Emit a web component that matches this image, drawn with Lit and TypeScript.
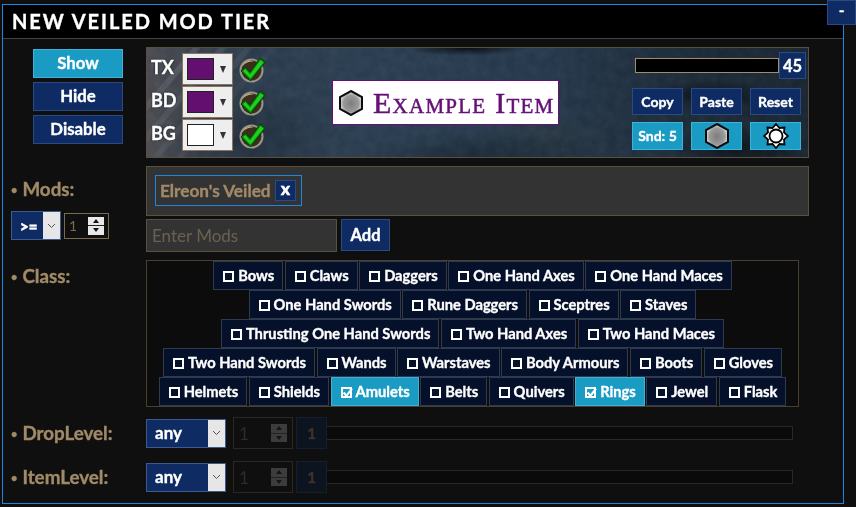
import { LitElement, html, css, svg } from "lit";
import { customElement } from "lit/decorators.js";

const ROWS: string[][] = [
  ["Bows", "Claws", "Daggers", "One Hand Axes", "One Hand Maces"],
  ["One Hand Swords", "Rune Daggers", "Sceptres", "Staves"],
  ["Thrusting One Hand Swords", "Two Hand Axes", "Two Hand Maces"],
  ["Two Hand Swords", "Wands", "Warstaves", "Body Armours", "Boots", "Gloves"],
  ["Helmets", "Shields", "Amulets", "Belts", "Quivers", "Rings", "Jewel", "Flask"],
];
const CHECKED = new Set(["Amulets", "Rings"]);

const hex = (size: number, id: string) => html`<svg width=${size} height=${Math.round(size * 1.1)} viewBox="0 0 24 26">
  <defs><radialGradient id=${id} cx="50%" cy="52%" r="52%"><stop offset="0" stop-color="#7e7e7e"/><stop offset="0.65" stop-color="#999"/><stop offset="1" stop-color="#e4e4e4"/></radialGradient></defs>
  <polygon points="12,1 23,7 23,19 12,25 1,19 1,7" fill="url(#${id})" stroke="#0c0c0c" stroke-width="2"/>
</svg>`;

const checkIcon = () => html`<svg class="chk" width="27" height="27" viewBox="0 0 27 27">
  <circle cx="12.5" cy="14.5" r="12" fill="#9a958a"/>
  <circle cx="12.5" cy="14.5" r="10" fill="#3c2d1c"/>
  <path d="M11 4.5 a10 10 0 0 0 -8 6 a14 14 0 0 1 12 -5z" fill="#c2b57f"/>
  <path d="M2 15 L6.5 11 L11 16 L21 2 L26.5 6 L11.5 25 Z" fill="#0a7a0a" stroke="#0b3d0b" stroke-width="1"/>
  <path d="M4 15 L6.5 13 L11 18.5 L21.5 4 L24.5 6.5 L11.5 22.5 Z" fill="#1fd11f"/>
</svg>`;

@customElement("app-root")
export class AppRoot extends LitElement {
  static styles = css`
    :host { display: block; width: 856px; height: 507px; background: #0f0f0f; position: relative; overflow: hidden;
      font-family: "Lato", "Liberation Sans", sans-serif; font-weight: 700; font-size: 15px; color: #fff;
      -webkit-text-stroke: 0.35px currentColor; }
    * { box-sizing: border-box; }
    .panel { position: absolute; left: 2px; top: 4px; width: 842px; height: 500px; border: 1px solid #1d86e0; background: #0f0f0f; }
    .title { height: 34px; background: #000; border-bottom: 1px solid #444; padding-left: 9px; font-size: 20px; letter-spacing: 1.95px; line-height: 33px; }
    .min { position: absolute; left: 827px; top: 0; width: 29px; height: 25px; background: #0e2c63; border: 1px solid #2c4a80; text-align: center; line-height: 19px; font-size: 15px; z-index: 2; }
    .row { display: flex; }
    .side { width: 143px; flex: none; }
    .main { width: 663px; flex: none; }
    .r1 { margin-top: 8px; height: 111px; }
    .r1 .side { padding: 2px 0 0 30px; display: flex; flex-direction: column; gap: 4px; }
    .btn { background: #0e2c63; border: 1px solid #2c4a80; display: flex; align-items: center; justify-content: center; }
    .btn.on { background: #1a9bc3; border-color: #3fb3d6; }
    .r1 .side .btn { width: 90px; height: 29px; padding-bottom: 3px; font-size: 16.8px; }
    .preview { position: relative; height: 111px; border: 1px solid #5a5040; overflow: hidden; display: flex;
      background:
        radial-gradient(ellipse 70px 16px at 565px 48px, rgba(5,8,12,.7), transparent),
        radial-gradient(ellipse 70px 22px at 590px 100px, rgba(8,10,14,.65), transparent),
        radial-gradient(ellipse 60px 8px at 320px 0, rgba(5,8,10,.9), transparent),
        radial-gradient(ellipse 90px 50px at 100px 90px, rgba(15,22,30,.35), transparent),
        radial-gradient(ellipse 130px 25px at 330px 108px, rgba(12,20,28,.45), transparent),
        radial-gradient(ellipse 70px 24px at 400px 90px, rgba(50,55,40,.25), transparent),
        linear-gradient(90deg, #4a4b50 0, #3c424c 6%, #2b3b4d 16%, #2a3d50 38%, #25374a 60%, #1d2b39 80%, #1a2530 100%); }
    .grain { position: absolute; inset: 0; width: 100%; height: 100%; mix-blend-mode: soft-light; opacity: .3; }
    .streaks { position: absolute; left: 0; top: 0; width: 140px; height: 109px; }
    .colors { position: relative; width: 150px; flex: none; padding: 5px 0 0 4px; display: flex; flex-direction: column; gap: 1px; }
    .crow { display: flex; align-items: center; height: 32px; }
    .clabel { width: 31px; font-size: 18px; padding-bottom: 4px; text-shadow: 0 0 2px #000; }
    .swatch { width: 51px; height: 32px; background: #eee; border: 1px solid #8a7460; padding: 4px; display: flex; align-items: center; gap: 6px; }
    .swatch i { display: block; width: 27px; height: 22px; border: 1px solid #222; }
    .swatch b { width: 0; height: 0; border-left: 3.5px solid transparent; border-right: 3.5px solid transparent; border-top: 7px solid #333; }
    .chk { margin-left: 6px; }
    .center { position: relative; width: 262px; flex: none; padding: 32px 0 0 35px; }
    .item { width: 227px; height: 45px; background: #fff; border: 1px solid #660f78; display: flex; align-items: center; padding-left: 6px; gap: 10px;
      color: #660f78; font-family: "Liberation Serif", serif; font-variant: small-caps; font-weight: 400; font-size: 30px; letter-spacing: 1.25px; white-space: nowrap; -webkit-text-stroke: 0.5px currentColor; }
    .item svg { flex: none; }
    .right { position: absolute; left: 0; top: 0; width: 100%; padding-top: 4px; }
    .sl { display: flex; height: 27px; align-items: center; padding-left: 488px; }
    .sl .track { width: 144px; height: 15px; background: #000; border: 1px solid #a08c6e; }
    .sl .val { width: 27px; height: 27px; font-size: 16.5px; }
    .brow { display: flex; gap: 8px; padding-left: 485px; }
    .brow .btn { width: 51px; height: 27px; font-size: 14px; padding-bottom: 1px; }
    .b1 { margin-top: 9px; }
    .b2 { margin-top: 7px; align-items: center; }
    .b2 .btn { height: 28px; }
    .lab { color: #a08a68; font-size: 18.8px; height: 26px; line-height: 26px; padding-left: 8px; white-space: nowrap; }
    .lab::before { content: "•"; font-size: 11px; margin-right: 5px; vertical-align: 2px; }
    .r2 { margin-top: 8px; height: 86px; }
    .r2 .side { padding-top: 10px; }
    .ops { display: flex; align-items: center; margin: 9px 0 0 8px; gap: 3px; }
    .sel { display: flex; background: #0e2c63; border: 1px solid #3a5a90; }
    .sel .v { flex: 1; }
    .sel .a { width: 17px; flex: none; background: #e6e6e6; display: flex; align-items: center; justify-content: center; }
    .ge { width: 50px; height: 29px; }
    .ge .v { padding: 5px 0 0 8px; font-size: 15px; line-height: 18px; -webkit-text-stroke: .6px #fff; }
    .num { border: 1px solid #7a6a52; width: 45px; height: 26px; display: flex; align-items: center; padding-left: 4px; color: #7a6a52; font-weight: 400; font-size: 14px; justify-content: space-between; padding-right: 4px; -webkit-text-stroke: 0; }
    .spin { width: 16px; height: 18px; display: flex; flex-direction: column; gap: 1px; background: #222; }
    .spin span { flex: 1; background: #e8e8e8; display: flex; align-items: center; justify-content: center; }
    .spin u { width: 0; height: 0; border-left: 3.5px solid transparent; border-right: 3.5px solid transparent; }
    .spin .up { border-bottom: 4px solid #111; }
    .spin .dn { border-top: 4px solid #111; }
    .mods { height: 50px; background: #333; border: 1px solid #5a5040; padding: 8px 0 0 8px; }
    .chip { display: flex; align-items: center; justify-content: space-between; width: 147px; height: 31px; border: 1px solid #1d86e0; padding: 0 5px 0 4px; color: #a08a68; font-size: 17.2px; white-space: nowrap; }
    .chip .x { width: 21px; height: 21px; font-size: 17px; padding-bottom: 4px; flex: none; color: #fff; -webkit-text-stroke: .7px #fff; }
    .add { display: flex; gap: 4px; margin-top: 3px; }
    .input { width: 191px; height: 33px; background: #333; border: 1px solid #5a5040; color: #6c6150; font-weight: 400; font-size: 17px; line-height: 31px; padding-left: 5px; -webkit-text-stroke: 0; }
    .add .btn { width: 49px; height: 32px; font-size: 16.5px; }
    .r3 { margin-top: 8px; }
    .r3 .side { padding-top: 3px; }
    .classes { width: 653px; height: 147px; background: #0c0c0c; border: 1px solid #4a4030; display: flex; flex-direction: column; }
    .crow2 { display: flex; justify-content: center; height: 29px; gap: 1.5px; }
    .cb { height: 29px; background: #05112a; border: 1px solid #2f3a4f; display: flex; align-items: center; padding: 0 8px 2px 9px; gap: 4px; font-size: 14.7px; white-space: nowrap; }
    .cb.on { background: #1a9bc3; border-color: #3fb3d6; }
    .box { width: 11px; height: 11px; border: 2px solid #fff; background: #08122a; flex: none; margin-top: 3px; position: relative; }
    .cb.on .box { background: transparent; }
    .cb.on .box svg { position: absolute; left: -1px; top: -2px; }
    .lv { height: 32px; align-items: center; }
    .lv .side { height: 32px; padding-top: 3px; }
    .lv-main { display: flex; align-items: center; }
    .anysel { width: 80px; height: 29px; }
    .anysel .v { padding-left: 8px; font-size: 17px; line-height: 25px; }
    .dnum { width: 60px; height: 32px; margin-left: 7px; border: 1px solid #2b2722; display: flex; align-items: center; justify-content: space-between; padding: 0 5px; color: #2e2b28; font-weight: 400; font-size: 17px; -webkit-text-stroke: 0; }
    .dnum .spin { width: 16px; height: 18px; background: #222; }
    .dnum .spin span { background: #3c3c3c; }
    .dnum .spin .up { border-bottom-color: #151515; }
    .dnum .spin .dn { border-top-color: #151515; }
    .dval { width: 31px; height: 32px; margin-left: 3px; background: #0c1420; border: 1px solid #161d2b; color: #3f3428; display: flex; align-items: center; justify-content: center; font-size: 15px; }
    .dtrack { width: 466px; height: 14px; border: 1px solid #2b2722; background: #0a0a0a; border-left: none; }
    .lv2 { margin-top: 12px; }
    .lv1 { margin-top: 10px; }
  `;

  private spin() {
    return html`<div class="spin"><span><u class="up"></u></span><span><u class="dn"></u></span></div>`;
  }
  private chev() {
    return html`<svg width="9" height="6" viewBox="0 0 9 6"><path d="M1 1 L4.5 4.5 L8 1" fill="none" stroke="#555" stroke-width="1"/></svg>`;
  }
  private level(name: string, cls: string) {
    return html`<div class="row lv ${cls}">
      <div class="side"><div class="lab">${name}:</div></div>
      <div class="lv-main">
        <div class="sel anysel"><div class="v">any</div><div class="a">${this.chev()}</div></div>
        <div class="dnum">1 ${this.spin()}</div>
        <div class="dval">1</div>
        <div class="dtrack"></div>
      </div>
    </div>`;
  }

  render() {
    return html`
      <div class="min">-</div>
      <div class="panel">
        <div class="title">NEW VEILED MOD TIER</div>
        <div class="row r1">
          <div class="side">
            <div class="btn on">Show</div><div class="btn">Hide</div><div class="btn">Disable</div>
          </div>
          <div class="main preview">
            <svg class="streaks" viewBox="0 0 140 109">
              ${[8, 34, 60, 84].map((x, i) => svg`<path d="M${x - 60} 120 L${x + 50} -10" stroke="#8a8f96" stroke-opacity="${0.22 - i * 0.05}" stroke-width="6" fill="none"/>`)}
            </svg>
            <svg class="grain"><filter id="gr"><feTurbulence type="fractalNoise" baseFrequency="0.1" numOctaves="3" seed="4"/><feColorMatrix values="0 0 0 0 .5  0 0 0 0 .5  0 0 0 0 .5  1.6 0 0 0 -.4"/></filter><rect width="100%" height="100%" filter="url(#gr)"/></svg>
            <div class="colors">
              ${[["TX", "#630f70"], ["BD", "#630f70"], ["BG", "#fff"]].map(([l, c]) => html`<div class="crow">
                <div class="clabel">${l}</div>
                <div class="swatch"><i style="background:${c}"></i><b></b></div>
                ${checkIcon()}
              </div>`)}
            </div>
            <div class="center"><div class="item">${hex(24, "h1")}<span>Example Item</span></div></div>
            <div class="right">
              <div class="sl"><div class="track"></div><div class="btn val">45</div></div>
              <div class="brow b1"><div class="btn">Copy</div><div class="btn">Paste</div><div class="btn">Reset</div></div>
              <div class="brow b2"><div class="btn on">Snd: 5</div><div class="btn on">${hex(24, "h2")}</div><div class="btn on"><svg width="26" height="26" viewBox="0 0 26 26">
                <polygon points="13,1 16.5,5 21.5,4.5 21,9.5 25,13 21,16.5 21.5,21.5 16.5,21 13,25 9.5,21 4.5,21.5 5,16.5 1,13 5,9.5 4.5,4.5 9.5,5" fill="#fff" stroke="#000" stroke-width="1.8"/>
                <circle cx="13" cy="13" r="6.5" fill="#fff" stroke="#000" stroke-width="1.8"/></svg></div></div>
            </div>
          </div>
        </div>
        <div class="row r2">
          <div class="side">
            <div class="lab">Mods:</div>
            <div class="ops">
              <div class="sel ge"><div class="v">&gt;=</div><div class="a">${this.chev()}</div></div>
              <div class="num">1 ${this.spin()}</div>
            </div>
          </div>
          <div class="main">
            <div class="mods"><div class="chip">Elreon's Veiled <div class="btn x">x</div></div></div>
            <div class="add"><div class="input">Enter Mods</div><div class="btn">Add</div></div>
          </div>
        </div>
        <div class="row r3">
          <div class="side"><div class="lab">Class:</div></div>
          <div class="classes">
            ${ROWS.map((r) => html`<div class="crow2">${r.map((c) => {
              const on = CHECKED.has(c);
              return html`<div class="cb ${on ? "on" : ""}"><span class="box">${on ? html`<svg width="11" height="11" viewBox="0 0 10 10"><path d="M1.5 5 L4 8 L9 1.5" fill="none" stroke="#fff" stroke-width="2"/></svg>` : ""}</span>${c}</div>`;
            })}</div>`)}
          </div>
        </div>
        ${this.level("DropLevel", "lv1")}
        ${this.level("ItemLevel", "lv2")}
      </div>
    `;
  }
}
